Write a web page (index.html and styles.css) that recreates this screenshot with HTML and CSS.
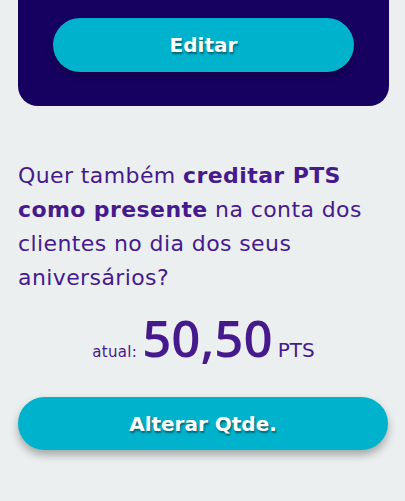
FILE: index.html
```html
<!DOCTYPE html>
<html lang="pt-BR">
<head>
<meta charset="utf-8">
<link rel="stylesheet" href="styles.css">
</head>
<body>
<div class="page">
  <section class="card">
    <button class="btn btn-edit">Editar</button>
  </section>
  <p class="question">Quer também <strong>creditar PTS<br>como presente</strong> na conta dos<br>clientes no dia dos seus<br>aniversários?</p>
  <div class="value">
    <span class="value-label">atual:</span>
    <span class="value-num">50,50</span>
    <span class="value-unit">PTS</span>
  </div>
  <button class="btn btn-change">Alterar Qtde.</button>
</div>
</body>
</html>
```
FILE: styles.css
```css
html, body {
  margin: 0;
  padding: 0;
  background: #ebeff0;
}
.page {
  width: 405px;
  height: 501px;
  overflow: hidden;
  display: flex;
  flex-direction: column;
  font-family: "DejaVu Sans", "Open Sans", sans-serif;
  color: #461a8c;
}
.card {
  margin: 0 16px 0 18px;
  background: #160060;
  border-radius: 0 0 20px 20px;
  padding: 18px 35px 34px 35px;
  display: flex;
}
.btn {
  border: none;
  border-radius: 30px;
  background: #00b2cc;
  color: #ffffff;
  font-family: "DejaVu Sans", "Open Sans", sans-serif;
  font-weight: 700;
  font-size: 20px;
  height: 54px;
  text-shadow: 1px 2px 2px rgba(0, 0, 0, 0.45);
  padding: 0;
  cursor: pointer;
}
.btn-edit {
  flex: 1;
  box-shadow: 0 4px 6px rgba(0, 0, 0, 0.25);
}
.question {
  margin: 53px 0 0 18px;
  font-size: 22px;
  letter-spacing: 0.4px;
  line-height: 34px;
  font-weight: 400;
}
.question strong {
  font-weight: 700;
}
.value {
  display: flex;
  justify-content: center;
  align-items: baseline;
  gap: 5px;
  margin-top: 12px;
  padding-left: 2px;
}
.value-label {
  font-size: 15px;
  letter-spacing: 0.3px;
}
.value-num {
  font-family: "Open Sans", "DejaVu Sans", sans-serif;
  font-size: 51px;
  font-weight: 600;
  line-height: 60px;
}
.value-unit {
  font-size: 20px;
}
.btn-change {
  margin: 30px 17px 0 18px;
  height: 53px;
  box-shadow: 0 5px 8px rgba(0, 0, 0, 0.3);
}
```
